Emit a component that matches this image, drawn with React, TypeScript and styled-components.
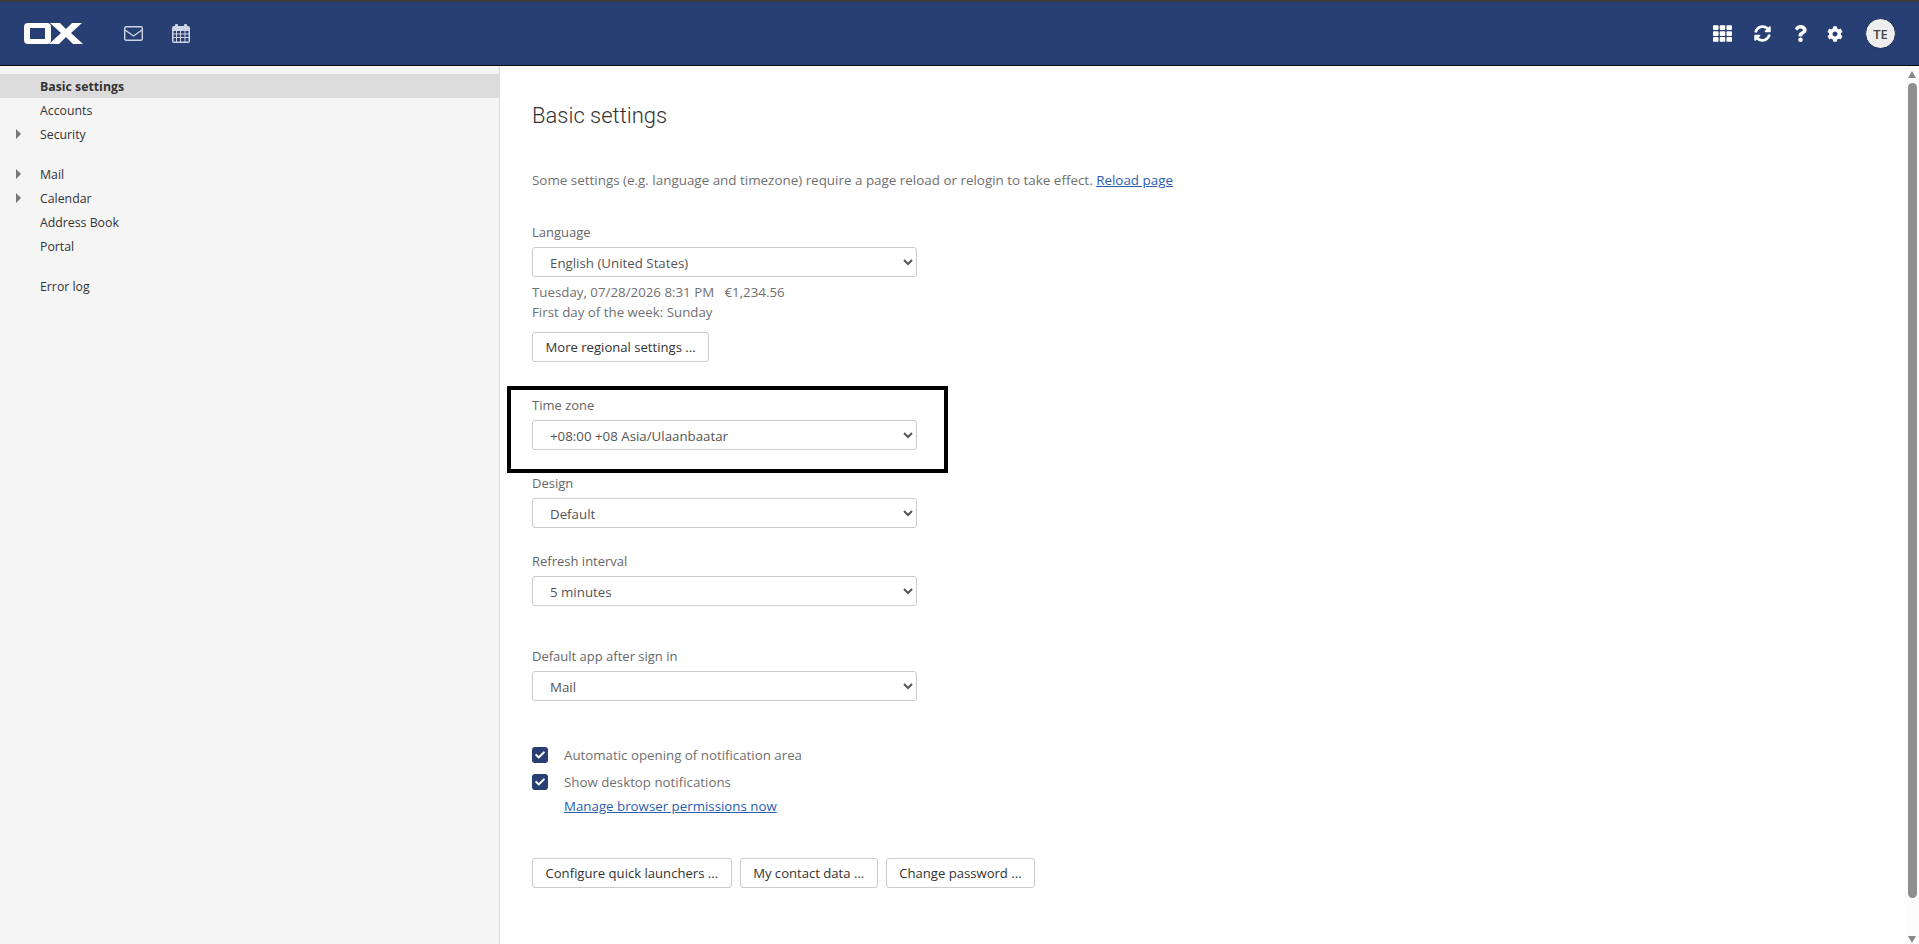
import React from "react";
import styled, { createGlobalStyle } from "styled-components";
import { FaCheck, FaCog, FaQuestion, FaSyncAlt, FaTh } from "react-icons/fa";

const GlobalStyle = createGlobalStyle`
  html, body {
    margin: 0;
    height: 100%;
    overflow: hidden;
    background: #fff;
  }
  * {
    box-sizing: border-box;
  }
  body {
    font-family: "Open Sans", "Noto Sans", sans-serif;
    font-size: 13.3px;
    color: #333;
  }
`;

const Page = styled.div`
  display: flex;
  flex-direction: column;
  height: 944px;
`;

const Header = styled.header`
  display: flex;
  align-items: center;
  flex: none;
  height: 66px;
  padding: 0 23px 0 24px;
  background: #283f73;
  border-top: 2px solid #3c3c3c;
  border-bottom: 1px solid #0a0a0a;
`;

const LeftIcons = styled.div`
  display: flex;
  align-items: center;
  gap: 29px;
  margin-left: 41px;
  color: #cdd4e3;
`;

const RightIcons = styled.div`
  display: flex;
  align-items: center;
  margin-left: auto;
  color: #fff;
`;

const HeaderIcon = styled.span<{ $width: number; $size: number }>`
  display: flex;
  justify-content: center;
  width: ${(props) => props.$width}px;
  font-size: ${(props) => props.$size}px;
`;

const Avatar = styled.div`
  display: flex;
  align-items: center;
  justify-content: center;
  width: 31px;
  height: 31px;
  margin-left: 13px;
  border-radius: 50%;
  background: #eee;
  border: 1px solid #1a2a50;
  color: #444;
  font-size: 13px;
  font-weight: 600;
`;

const Body = styled.div`
  display: flex;
  flex: 1;
  min-height: 0;
`;

const Sidebar = styled.nav`
  flex: none;
  width: 500px;
  padding-top: 8px;
  background: #f5f5f5;
  border-right: 1px solid #dcdcdc;
`;

const NavGroup = styled.div`
  margin-bottom: 16px;
`;

const NavRow = styled.div<{ $active?: boolean }>`
  position: relative;
  height: 24px;
  padding-left: 40px;
  line-height: 25px;
  font-size: 12.3px;
  color: #333;
  font-weight: ${(props) => (props.$active ? 700 : 400)};
  background: ${(props) => (props.$active ? "#dcdcdc" : "transparent")};
`;

const Caret = styled.span`
  position: absolute;
  left: 16px;
  top: 7px;
  border-left: 5px solid #777;
  border-top: 5px solid transparent;
  border-bottom: 5px solid transparent;
`;

const Main = styled.main`
  flex: 1;
  min-width: 0;
  padding: 34px 0 0 32px;
  color: #707070;
`;

const Title = styled.h1`
  margin: 0;
  font-family: Roboto, "Open Sans", sans-serif;
  font-size: 22px;
  font-weight: 300;
  line-height: 32px;
  color: #333;
`;

const Intro = styled.p`
  margin: 38px 0 32px;
  font-size: 13.42px;
  line-height: 20px;
`;

const TextLink = styled.a`
  color: #2a5db0;
  text-decoration: underline;
`;

const Field = styled.div<{ $bottom?: number }>`
  position: relative;
  width: 385px;
  margin-bottom: ${(props) => props.$bottom ?? 23}px;
`;

const Label = styled.label`
  display: block;
  height: 20px;
  margin-bottom: 5px;
  line-height: 20px;
  font-size: 13px;
  font-weight: 500;
  color: #666;
`;

const Select = styled.select`
  display: block;
  width: 100%;
  height: 30px;
  padding: 1px 13px 0;
  background: #fff;
  border: 1px solid #ccc;
  border-radius: 3px;
  color: #555;
  font: inherit;
`;

const Callout = styled.div`
  position: absolute;
  left: -25px;
  top: -9px;
  width: 441px;
  height: 87px;
  border: 4px solid #000;
  pointer-events: none;
`;

const InfoLine = styled.div`
  line-height: 20px;
`;

const Info = styled.div`
  margin-top: 5px;
`;

const Button = styled.button`
  height: 30px;
  padding: 0 12.5px;
  background: #fff;
  border: 1px solid #ccc;
  border-radius: 3px;
  color: #333;
  font: inherit;
  font-size: 13.1px;
  white-space: nowrap;
`;

const RegionalButton = styled(Button)`
  margin: 10px 0 33px;
`;

const Checks = styled.div`
  margin-top: 44px;
`;

const CheckRow = styled.div`
  display: flex;
  align-items: center;
  gap: 16px;
  height: 20px;
  margin-bottom: 7px;
`;

const Box = styled.span`
  display: flex;
  align-items: center;
  justify-content: center;
  width: 16px;
  height: 16px;
  border-radius: 3px;
  background: #283f73;
  color: #fff;
  font-size: 10px;
`;

const PermissionLink = styled(TextLink)`
  display: block;
  margin: -3px 0 0 32px;
  line-height: 20px;
`;

const ButtonRow = styled.div`
  display: flex;
  gap: 8px;
  margin-top: 42px;
`;

const ScrollBar = styled.div`
  display: flex;
  flex-direction: column;
  align-items: center;
  flex: none;
  width: 14px;
  padding: 5px 0 1px;
  background: #fcfcfc;
`;

const ArrowUp = styled.span`
  border-left: 4.5px solid transparent;
  border-right: 4.5px solid transparent;
  border-bottom: 7px solid #8a8a8a;
`;

const ArrowDown = styled.span`
  border-left: 4.5px solid transparent;
  border-right: 4.5px solid transparent;
  border-top: 7px solid #8a8a8a;
`;

const Thumb = styled.div`
  flex: 1;
  width: 9px;
  margin: 5px 0 38px;
  border-radius: 5px;
  background: #8f8f8f;
`;

const Logo = () => (
  <svg width="59" height="21" viewBox="0 0 59 21">
    <path
      fill="#fff"
      fillRule="evenodd"
      d="M4 0H23Q27 0 27 4V17Q27 21 23 21H4Q0 21 0 17V4Q0 0 4 0ZM6 5V16H21V5Z"
    />
    <path
      fill="#fff"
      d="M26 0H36L42 6L48 0H58L47 10L59 21H49L42 14L35 21H25L37 10Z"
    />
  </svg>
);

const MailIcon = () => (
  <svg width="19" height="15" viewBox="0 0 19 15" fill="none" stroke="currentColor" strokeWidth="1.4">
    <rect x="0.7" y="0.7" width="17.6" height="13.6" rx="1.5" />
    <path d="M1 4L9.5 10L18 4" />
  </svg>
);

const CalendarIcon = () => (
  <svg width="18" height="19" viewBox="0 0 18 19" fill="currentColor">
    <path
      fillRule="evenodd"
      d="M2 2H3V1Q3 0 4 0H5Q6 0 6 1V2H12V1Q12 0 13 0H14Q15 0 15 1V2H16Q18 2 18 4V17Q18 19 16 19H2Q0 19 0 17V4Q0 2 2 2ZM1.5 7V9.5H4V7ZM5 7V9.5H8V7ZM9 7V9.5H12.5V7ZM13.5 7V9.5H16.5V7ZM1.5 10.5V13H4V10.5ZM5 10.5V13H8V10.5ZM9 10.5V13H12.5V10.5ZM13.5 10.5V13H16.5V10.5ZM1.5 14V17.5H4V14ZM5 14V17.5H8V14ZM9 14V17.5H12.5V14ZM13.5 14V17.5H16.5V14Z"
    />
  </svg>
);

const App = (): JSX.Element => {
  return (
    <Page>
      <GlobalStyle />
      <Header>
        <Logo />
        <LeftIcons>
          <MailIcon />
          <CalendarIcon />
        </LeftIcons>
        <RightIcons>
          <HeaderIcon $width={40} $size={19}>
            <FaTh />
          </HeaderIcon>
          <HeaderIcon $width={40} $size={17}>
            <FaSyncAlt />
          </HeaderIcon>
          <HeaderIcon $width={36} $size={17}>
            <FaQuestion />
          </HeaderIcon>
          <HeaderIcon $width={34} $size={16}>
            <FaCog />
          </HeaderIcon>
          <Avatar>TE</Avatar>
        </RightIcons>
      </Header>
      <Body>
        <Sidebar>
          <NavGroup>
            <NavRow $active>Basic settings</NavRow>
            <NavRow>Accounts</NavRow>
            <NavRow>
              <Caret />
              Security
            </NavRow>
          </NavGroup>
          <NavGroup>
            <NavRow>
              <Caret />
              Mail
            </NavRow>
            <NavRow>
              <Caret />
              Calendar
            </NavRow>
            <NavRow>Address Book</NavRow>
            <NavRow>Portal</NavRow>
          </NavGroup>
          <NavGroup>
            <NavRow>Error log</NavRow>
          </NavGroup>
        </Sidebar>
        <Main>
          <Title>Basic settings</Title>
          <Intro>
            Some settings (e.g. language and timezone) require a page reload or relogin to take
            effect. <TextLink href="#">Reload page</TextLink>
          </Intro>
          <Field $bottom={0}>
            <Label>Language</Label>
            <Select defaultValue="en">
              <option value="en">English (United States)</option>
            </Select>
          </Field>
          <Info>
            <InfoLine>Tuesday, 07/28/2026 8:31 PM &nbsp; €1,234.56</InfoLine>
            <InfoLine>First day of the week: Sunday</InfoLine>
          </Info>
          <RegionalButton>More regional settings ...</RegionalButton>
          <Field>
            <Callout />
            <Label>Time zone</Label>
            <Select defaultValue="ub">
              <option value="ub">+08:00 +08 Asia/Ulaanbaatar</option>
            </Select>
          </Field>
          <Field>
            <Label>Design</Label>
            <Select defaultValue="default">
              <option value="default">Default</option>
            </Select>
          </Field>
          <Field $bottom={40}>
            <Label>Refresh interval</Label>
            <Select defaultValue="5">
              <option value="5">5 minutes</option>
            </Select>
          </Field>
          <Field $bottom={0}>
            <Label>Default app after sign in</Label>
            <Select defaultValue="mail">
              <option value="mail">Mail</option>
            </Select>
          </Field>
          <Checks>
            <CheckRow>
              <Box>
                <FaCheck />
              </Box>
              Automatic opening of notification area
            </CheckRow>
            <CheckRow>
              <Box>
                <FaCheck />
              </Box>
              Show desktop notifications
            </CheckRow>
            <PermissionLink href="#">Manage browser permissions now</PermissionLink>
          </Checks>
          <ButtonRow>
            <Button>Configure quick launchers ...</Button>
            <Button>My contact data ...</Button>
            <Button>Change password ...</Button>
          </ButtonRow>
        </Main>
        <ScrollBar>
          <ArrowUp />
          <Thumb />
          <ArrowDown />
        </ScrollBar>
      </Body>
    </Page>
  );
};

export default App;
